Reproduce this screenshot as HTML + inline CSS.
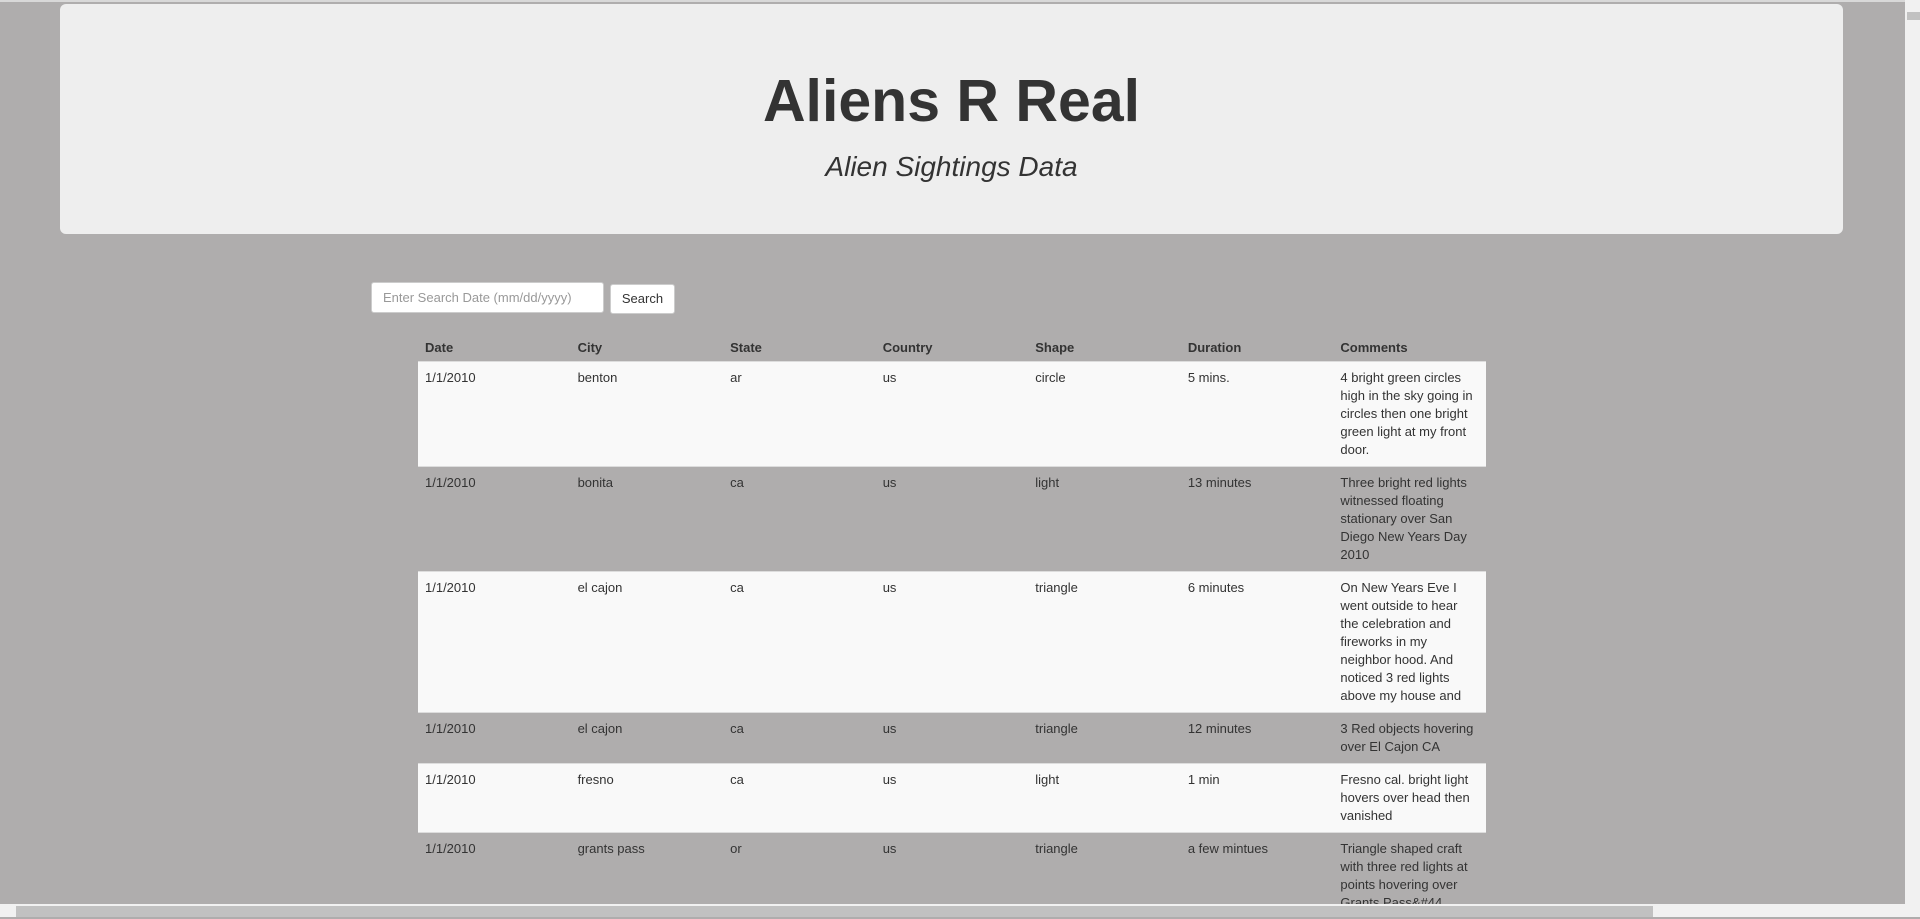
<!DOCTYPE html>
<html><head><meta charset="utf-8"><style>
html,body{margin:0;padding:0;width:1920px;height:917px;overflow:hidden;background:#afadad;font-family:"Liberation Sans",Arial,sans-serif;color:#333}
.topline{position:absolute;left:0;top:0;width:1905px;height:2px;background:#d8d8d8}
.jumbo{position:absolute;left:60px;top:4px;width:1783px;height:230px;background:#eee;border-radius:6px;text-align:center}
.jumbo h1{margin:0;position:absolute;top:62px;left:0;right:0;font-size:59px;line-height:70px;font-weight:bold}
.jumbo p{margin:0;position:absolute;top:146px;left:0;right:0;font-size:28px;line-height:34px;font-style:italic}
.inp{position:absolute;left:371px;top:282px;background:#fff;border:1px solid #ccc;border-radius:3px;box-sizing:border-box;width:233px;height:31px;font-size:13px;color:#999;padding:0 11px;line-height:29px}
.btn{position:absolute;left:610px;top:284px;width:65px;height:30px;background:#fff;border:1px solid #ccc;border-radius:3px;box-sizing:border-box;font-size:13px;line-height:28px;text-align:center;color:#333}
table{position:absolute;left:418px;top:334px;width:1068px;border-collapse:collapse;table-layout:fixed;font-size:13px}
th{text-align:left;font-weight:bold;padding:5px 7px 4px;line-height:18px;height:18px}
td{vertical-align:top;padding:7px 7px 7px;line-height:18px;border-top:1px solid #ddd;white-space:nowrap;overflow:hidden}
tr.o td{background:#f9f9f9}
.vs{position:absolute;right:0;top:0;width:15px;height:902px;background:#f1f1f1}
.vs .t{position:absolute;left:2px;top:12px;width:13px;height:8px;background:#c1c1c1}
.hs{position:absolute;left:0;top:904px;width:1905px;height:13px;background:#f1f1f1}
.hs .t{position:absolute;left:16px;top:2px;width:1637px;height:11px;background:#c1c1c1}
.corner{position:absolute;right:0;top:902px;width:15px;height:15px;background:#f1f1f1}
</style></head><body>
<div class="topline"></div>
<div class="jumbo"><h1>Aliens R Real</h1><p>Alien Sightings Data</p></div>
<div class="inp">Enter Search Date (mm/dd/yyyy)</div>
<div class="btn">Search</div>
<table>
<tr><th>Date</th><th>City</th><th>State</th><th>Country</th><th>Shape</th><th>Duration</th><th>Comments</th></tr>
<tr class="o"><td>1/1/2010</td><td>benton</td><td>ar</td><td>us</td><td>circle</td><td>5 mins.</td><td>4 bright green circles<br>high in the sky going in<br>circles then one bright<br>green light at my front<br>door.</td></tr>
<tr><td>1/1/2010</td><td>bonita</td><td>ca</td><td>us</td><td>light</td><td>13 minutes</td><td>Three bright red lights<br>witnessed floating<br>stationary over San<br>Diego New Years Day<br>2010</td></tr>
<tr class="o"><td>1/1/2010</td><td>el cajon</td><td>ca</td><td>us</td><td>triangle</td><td>6 minutes</td><td>On New Years Eve I<br>went outside to hear<br>the celebration and<br>fireworks in my<br>neighbor hood. And<br>noticed 3 red lights<br>above my house and</td></tr>
<tr><td>1/1/2010</td><td>el cajon</td><td>ca</td><td>us</td><td>triangle</td><td>12 minutes</td><td>3 Red objects hovering<br>over El Cajon CA</td></tr>
<tr class="o"><td>1/1/2010</td><td>fresno</td><td>ca</td><td>us</td><td>light</td><td>1 min</td><td>Fresno cal. bright light<br>hovers over head then<br>vanished</td></tr>
<tr><td>1/1/2010</td><td>grants pass</td><td>or</td><td>us</td><td>triangle</td><td>a few mintues</td><td>Triangle shaped craft<br>with three red lights at<br>points hovering over<br>Grants Pass&amp;#44</td></tr>
</table>
<div class="vs"><div class="t"></div></div>
<div class="hs"><div class="t"></div></div>
<div class="corner"></div>
</body></html>
